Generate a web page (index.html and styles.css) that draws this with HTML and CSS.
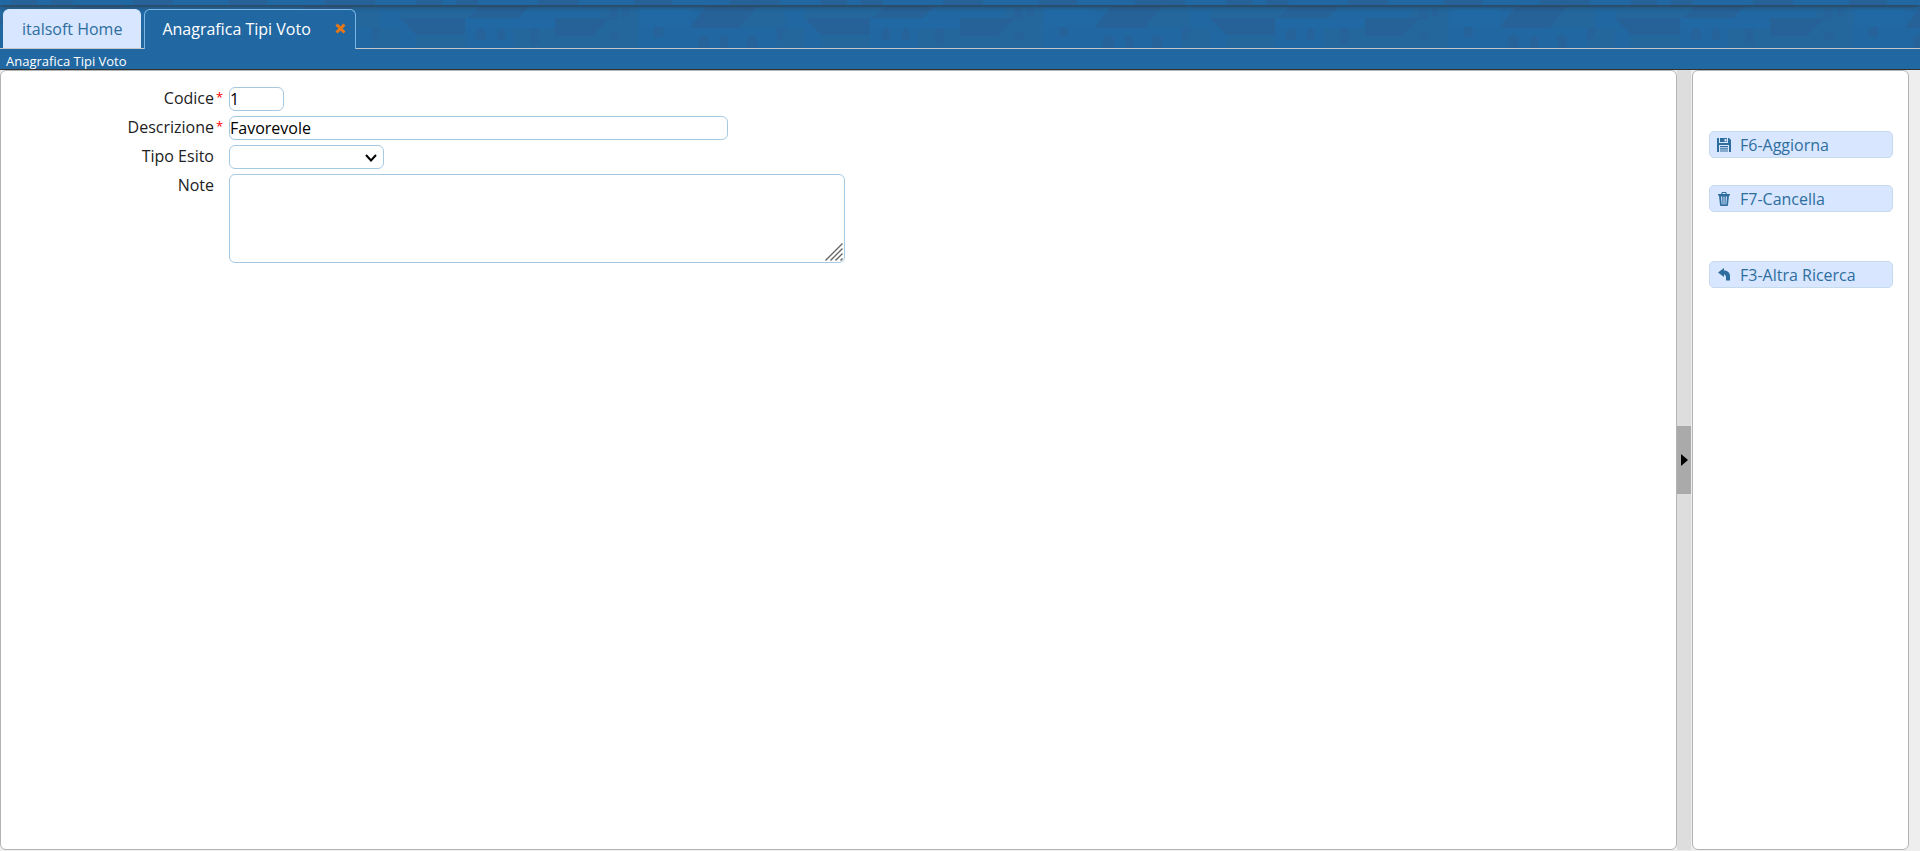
FILE: index.html
```html
<!DOCTYPE html>
<html lang="it">
<head>
  <meta charset="UTF-8">
  <title>Anagrafica Tipi Voto</title>
  <link rel="stylesheet" href="styles.css">
</head>
<body>

  <header class="top">
    <svg class="skyline" width="100%" height="100%" aria-hidden="true">
      <defs>
        <pattern id="houses" x="-5" y="0" width="405" height="48" patternUnits="userSpaceOnUse">
          <rect width="405" height="48" fill="#2167a2"/>
          <!-- walls -->
          <g fill="#23679d">
            <path d="M16 36H65V48H16z"/>
            <path d="M113 28H155V48H113z"/>
            <path d="M155 36H190L200 28H238V48H155z"/>
            <path d="M0 6H78L68 18H0z"/>
            <path d="M200 6H238V28H200z"/>
            <path d="M358 6H385V28H339z"/>
            <path d="M380 28H405V48H376z"/>
          </g>
          <!-- roofs -->
          <g fill="#266197">
            <path d="M80 6H130L118 18H68z"/>
            <path d="M0 18H65V35H16z"/>
            <path d="M155 18H210L192 36H155z"/>
            <path d="M306 6H358L339 28H290z"/>
            <path d="M16 0H42V5H16zM56 0H78V5H56zM138 0H178V5H138zM234 0H272V5H234zM330 0H380V5H330z"/>
          </g>
          <!-- doors and windows -->
          <g fill="#25639a">
            <path d="M76 40V32Q81 24 86 32V40zM97 40V32Q101 24 105 32V40zM130 28H139V45H130z"/>
            <path d="M254 37V27Q258 21 263 27V37z"/>
            <ellipse cx="214" cy="36" rx="5" ry="5"/>
            <path d="M298 48V38Q304 32 309 38V48zM320 48V38Q324 32 328 38V48zM347 48V38Q352 32 357 38V48z"/>
            <path d="M377 28H387L380 42H377z"/>
            <path d="M209 8H218V20H209zM222 8H229V17H222z"/>
          </g>
          <path fill="#2069a5" d="M66 19H155V28H66zM240 8H290V27H240z"/>
        </pattern>
      </defs>
      <rect width="100%" height="100%" fill="url(#houses)"/>
    </svg>
    <div class="strip"></div>
    <nav class="tabs">
      <a class="tab" href="#home">italsoft Home</a>
      <div class="tab active">
        <a href="#voto">Anagrafica Tipi Voto</a>
        <button class="close" type="button" aria-label="Chiudi">
          <svg width="11" height="11" viewBox="0 0 11 11"><path d="M1.500 1.500L9.500 9.500M9.500 1.500L1.500 9.500" stroke="#e77817" stroke-width="3"/></svg>
        </button>
      </div>
    </nav>
  </header>

  <h1 class="title">Anagrafica Tipi Voto</h1>

  <main class="layout">
    <form class="panel form">
      <label for="codice">Codice</label>
      <span class="req">*</span>
      <input class="field short" id="codice" type="text" value="1">

      <label for="descrizione">Descrizione</label>
      <span class="req">*</span>
      <input class="field long" id="descrizione" type="text" value="Favorevole">

      <label for="esito">Tipo Esito</label>
      <span></span>
      <div class="esito">
        <select class="field" id="esito">
          <option></option>
          <option>Positivo</option>
          <option>Negativo</option>
        </select>
        <svg class="arrow" width="12" height="8" viewBox="0 0 12 8"><path d="M1 1L6 6.500L11 1" fill="none" stroke="#000" stroke-width="2"/></svg>
      </div>

      <label for="note">Note</label>
      <span></span>
      <div class="note">
        <textarea class="field" id="note"></textarea>
        <svg class="grip" width="18" height="18" viewBox="0 0 18 18"><path d="M0.500 17.500L17.500 0.500M5.500 17.500L17.500 5.500M10.500 17.500L17.500 10.500M15.500 17.500L17.500 15.500" stroke="#666" stroke-width="1.400"/></svg>
      </div>
    </form>

    <div class="resizer">
      <button class="toggler" type="button" aria-label="Chiudi pannello">
        <svg width="7" height="12" viewBox="0 0 7 12"><path d="M0 0L7 6L0 12z"/></svg>
      </button>
    </div>

    <aside class="panel actions">
      <button class="btn" type="button">
        <svg width="14" height="14" viewBox="0 0 14 14"><path fill-rule="evenodd" d="M0 0H2V5H11V0H12L14 2V14H12V7H2V14H0zM3 0H10V4H3zM7.500 1V3.500H9.500V1z"/><path d="M3 8H11V9.200H3zM3 10.200H11V11.400H3zM3 12.400H11V13.600H3z"/></svg>
        F6-Aggiorna
      </button>
      <button class="btn" type="button">
        <svg width="14" height="14" viewBox="0 0 14 14"><path fill-rule="evenodd" d="M1 2H4L5 0H9L10 2H13V3.500H12L11 13Q11 14 10 14H4Q3 14 3 13L2 3.500H1zM5.200 2H8.800L8.300 1H5.700zM4 4.500L4.700 12.500H5.500L5.200 4.500zM6.500 4.500V12.500H7.500V4.500zM8.800 4.500L8.500 12.500H9.300L10 4.500z"/></svg>
        F7-Cancella
      </button>
      <button class="btn back" type="button">
        <svg width="14" height="14" viewBox="0 0 14 14"><path d="M1 4.500L7 0V2.500C11 2.500 13 5 13 8V12.500H9V10C9 8 8.500 6.500 7 6.500V9z"/></svg>
        F3-Altra Ricerca
      </button>
    </aside>
  </main>

</body>
</html>
```
FILE: styles.css
```css
* {
  box-sizing: border-box;
}

body {
  margin: 0;
  height: 100vh;
  display: flex;
  flex-direction: column;
  font-family: "Open Sans", sans-serif;
  font-size: 16px;
  line-height: 22px;
  color: #222;
  background: #eee;
}

a {
  color: inherit;
  text-decoration: none;
}

input, select, textarea, button {
  font: inherit;
}

/* header with tabs */
.top {
  position: relative;
  background: #2167a2;
}

.skyline {
  position: absolute;
  inset: 0;
}

.strip {
  position: relative;
  height: 5px;
  box-shadow: 0 1px 5px rgba(51, 51, 51, 0.9);
}

.tabs {
  position: relative;
  display: flex;
  gap: 3px;
  padding: 4px 3px 0;
  border-bottom: 1px solid #c5c5c5;
}

.tab {
  height: 39px;
  padding: 8px 18px;
  border: 1px solid #d8e6ff;
  border-bottom: 0;
  border-radius: 6px 6px 0 0;
  background: #d8e6ff;
  color: #2e6e9e;
}

.tab.active {
  display: flex;
  align-items: center;
  gap: 24px;
  height: 40px;
  margin-bottom: -1px;
  padding: 0 9px 2px 17px;
  border-color: #79b7e7;
  background: #2167a2;
  color: #fff;
}

.close {
  display: flex;
  padding: 0;
  border: 0;
  background: none;
  cursor: pointer;
}

.title {
  margin: 0;
  height: 21px;
  padding: 1px 6px 0;
  border-bottom: 1px solid #333;
  background: #2167a2;
  color: #fff;
  font-size: 13px;
  font-weight: normal;
  line-height: 22px;
}

/* content */
.layout {
  flex: 1;
  display: flex;
  padding: 0 11px 1px 0;
}

.panel {
  border: 1px solid #b4b4b4;
  border-radius: 6px;
  background: #fff;
}

.form {
  flex: 1;
  display: grid;
  grid-template-columns: 213px 15px 1fr;
  align-content: start;
  row-gap: 5px;
  padding-top: 16px;
}

.form label {
  text-align: right;
}

.req {
  padding-left: 2px;
  color: #f00;
  font-size: 13px;
  line-height: 20px;
}

.field {
  height: 24px;
  margin: 0;
  padding: 0;
  border: 1px solid #a6c9e2;
  border-radius: 6px;
  background: #fff;
  color: #000;
}

.short {
  width: 55px;
}

.long {
  width: 499px;
}

.esito {
  position: relative;
  width: 155px;
  height: 24px;
}

.esito .field {
  display: block;
  width: 100%;
  appearance: none;
}

.arrow {
  position: absolute;
  top: 9px;
  right: 7px;
  pointer-events: none;
}

.note {
  position: relative;
  width: 616px;
  height: 89px;
}

.note .field {
  display: block;
  width: 100%;
  height: 100%;
  resize: none;
}

.grip {
  position: absolute;
  right: 2px;
  bottom: 2px;
}

/* resizer between the two panels */
.resizer {
  display: flex;
  align-items: center;
  width: 14px;
  margin-right: 1px;
  background: #ddd;
}

.toggler {
  display: flex;
  align-items: center;
  justify-content: center;
  width: 14px;
  height: 68px;
  padding: 0;
  border: 0;
  background: #aaa;
  cursor: pointer;
}

.actions {
  display: flex;
  flex-direction: column;
  gap: 27px;
  width: 217px;
  padding: 60px 15px 0 16px;
}

.btn {
  display: flex;
  align-items: center;
  gap: 9px;
  height: 27px;
  padding: 0 7px;
  border: 1px solid #c5dbec;
  border-radius: 5px;
  background: #d8e6ff;
  color: #2e6e9e;
  cursor: pointer;
}

.btn svg {
  fill: #2e6e9e;
}

.back {
  margin-top: 22px;
}
```
